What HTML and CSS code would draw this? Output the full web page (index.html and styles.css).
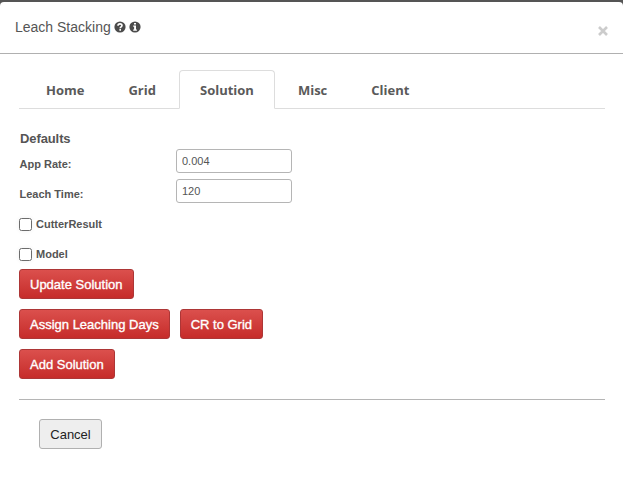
FILE: index.html
```
<!DOCTYPE html>
<html lang="en">
<head>
<meta charset="utf-8">
<title>Leach Stacking</title>
<link rel="stylesheet" href="styles.css">
</head>
<body>
<div class="dialog">
  <header class="header">
    <h1 class="title">Leach Stacking</h1>
    <svg class="icon" viewBox="0 0 12 12"><circle cx="6" cy="6" r="5.6" fill="#4b4b4b"/><path d="M4 4.7C4 2.2 8 2.3 8 4.6C8 6 6.2 5.9 6.2 7.3M6.2 8.1V9.7" fill="none" stroke="#fff" stroke-width="1.6"/></svg>
    <svg class="icon" viewBox="0 0 12 12"><circle cx="6" cy="6" r="5.6" fill="#4b4b4b"/><path d="M5 2H7V3.6H5ZM4.2 4.6H7V8.4H7.9V9.7H4.2V8.4H5.1V5.8H4.2Z" fill="#fff"/></svg>
    <button class="close" aria-label="Close"><svg viewBox="0 0 10 10"><path d="M1 1L9 9M9 1L1 9" stroke="#cccccc" stroke-width="2.6"/></svg></button>
  </header>
  <main class="body">
    <nav class="tabs">
      <a class="tab">Home</a><a class="tab">Grid</a><a class="tab active">Solution</a><a class="tab">Misc</a><a class="tab">Client</a>
    </nav>
    <h2 class="subtitle">Defaults</h2>
    <div class="field"><label for="rate">App Rate:</label><input id="rate" type="text" value="0.004"></div>
    <div class="field"><label for="time">Leach Time:</label><input id="time" type="text" value="120"></div>
    <label class="check"><input type="checkbox"><span>CutterResult</span></label>
    <label class="check"><input type="checkbox"><span>Model</span></label>
    <div class="row"><button class="btn">Update Solution</button></div>
    <div class="row"><button class="btn">Assign Leaching Days</button><button class="btn">CR to Grid</button></div>
    <div class="row"><button class="btn">Add Solution</button></div>
    <footer class="footer"><button class="btn cancel">Cancel</button></footer>
  </main>
</div>
</body>
</html>
```
FILE: styles.css
```
* { box-sizing: border-box; }
body { margin: 0; height: 486px; overflow: hidden; background: #555; font-family: "Liberation Sans", Arial, sans-serif; color: #555; }
.dialog { display: flow-root; margin-top: 2px; height: 484px; background: #fff; border-radius: 4px 4px 0 0; }
.header { display: flex; align-items: center; height: 52px; padding: 0 15px 1px; border-bottom: 1px solid #b0b0b0; }
.title { margin: 0 4px 0 0; font-size: 14px; font-weight: 400; line-height: 20px; width: 95px; white-space: nowrap; }
.icon { width: 12px; height: 12px; margin-right: 3px; }
.close { margin: 7px 0 0 auto; padding: 0; border: 0; background: none; width: 10px; height: 10px; }
.close svg { display: block; width: 10px; height: 10px; }
.body { padding: 16px 18px 0 19px; }
.tabs { display: flex; height: 39px; border-bottom: 1px solid #ddd; }
.tab { height: 39px; padding: 0 20px; border: 1px solid transparent; margin-right: 2px; font: 700 13px/39px "Open Sans", sans-serif; color: #5a5a5a; }
.tab:first-child { margin-left: 6px; }
.tab.active { border-color: #ddd; border-bottom-color: #fff; border-radius: 4px 4px 0 0; background: #fff; }
.subtitle { margin: 20px 0 0; padding-left: 1px; font-size: 13px; line-height: 20px; letter-spacing: -0.1px; }
.field { display: flex; height: 30px; }
.field label { width: 157px; padding: 5px 0 0 0.5px; font-size: 11px; font-weight: 700; line-height: 20px; }
.field input { width: 116px; height: 24px; padding: 0 5px; border: 1px solid #b5b5b5; border-radius: 3px; font: 11px "Liberation Sans", sans-serif; color: #555; }
.check { display: flex; align-items: center; height: 30px; font-size: 11px; font-weight: 700; }
.check input { appearance: none; width: 13px; height: 13px; margin: 1px 4px 0 0; border: 1px solid #6c6c6c; border-radius: 2.5px; background: #fff; box-shadow: 0 0 5px rgba(0, 0, 0, 0.06); }
.row { display: flex; gap: 10px; height: 40px; }
.btn { height: 30px; padding: 0 10px; border: 1px solid #ad3636; border-radius: 3px; background: linear-gradient(#db504d, #c62c2a); color: #fff; font: 13px "Liberation Sans", sans-serif; -webkit-text-stroke: 0.35px #fff; white-space: nowrap; }
.footer { margin-top: 10px; padding: 19px 20px 0; border-top: 1px solid #b5b5b5; }
.cancel { width: 63px; border-color: #b0b0b0; background: #eee; color: #222; -webkit-text-stroke: 0; }
```
